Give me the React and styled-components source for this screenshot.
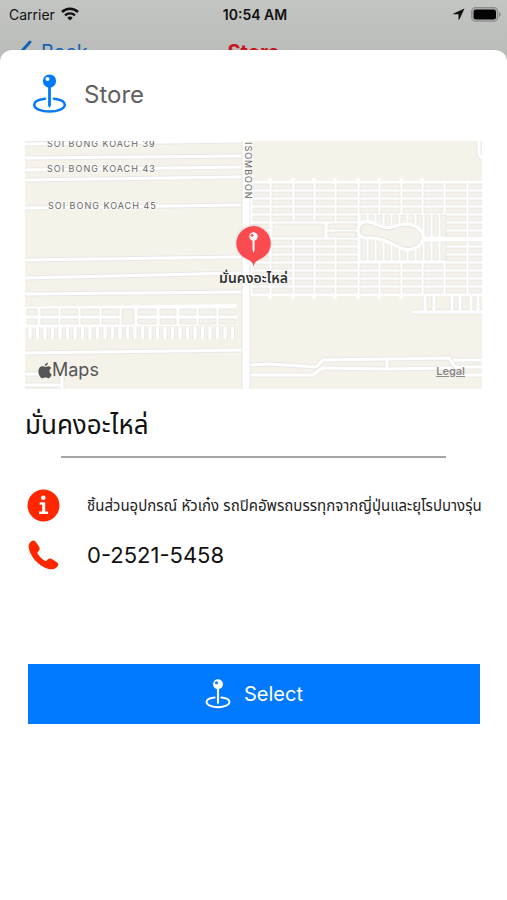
import React from 'react';
import styled, { createGlobalStyle } from 'styled-components';

const GlobalStyle = createGlobalStyle`
  * { box-sizing: border-box; }
  html { background: #fff; }
  body {
    margin: 0;
    font-family: Inter, "Liberation Sans", "Noto Sans Thai", sans-serif;
    color: #111;
  }
`;

const Page = styled.div`
  display: flex;
  flex-direction: column;
  min-height: 100vh;
  background: #bbbdba;
`;

const StatusBar = styled.div`
  display: grid;
  grid-template-columns: 1fr auto 1fr;
  align-items: center;
  height: 28px;
  padding: 0 6px 0 9px;
  font-size: 14px;
  color: #111;
  background: linear-gradient(#c3c5c2, #bec0bd);
`;

const StatusGroup = styled.div`
  display: flex;
  align-items: center;
  justify-content: ${(p) => (p.$end ? 'flex-end' : 'flex-start')};
  gap: 6px;
`;

const Time = styled.time`
  font-weight: 600;
`;

const NavBar = styled.nav`
  display: grid;
  grid-template-columns: 1fr auto 1fr;
  align-items: start;
  height: 22px;
  padding: 12px 18px 0;
  overflow: hidden;
  font-size: 20px;
  line-height: 24px;
  background: linear-gradient(#bec0bd, #bbbdba);
`;

const BackButton = styled.button`
  display: flex;
  gap: 8px;
  padding: 0;
  border: 0;
  background: none;
  color: #1263ba;
  font: inherit;
  text-align: left;
`;

const NavTitle = styled.span`
  color: #c4161c;
  font-weight: 700;
`;

const Sheet = styled.main`
  flex: 1;
  display: flex;
  flex-direction: column;
  padding: 24px 25px;
  border-radius: 12px 12px 0 0;
  background: #fff;
`;

const SheetHeader = styled.header`
  display: flex;
  align-items: center;
  gap: 17px;
  height: 40px;
  padding-left: 7px;
  color: #027aff;
`;

const SheetTitle = styled.h1`
  margin: 0;
  font-size: 24px;
  font-weight: 400;
  color: #606060;
`;

const MapFrame = styled.section`
  position: relative;
  height: 248px;
  margin-top: 27px;
  overflow: hidden;
  background: #f5f2eb;
`;

const MapDrawing = styled.svg`
  display: block;
  width: 100%;
  height: 100%;
`;

const RoadName = styled.text`
  font-size: 9px;
  letter-spacing: 1px;
  fill: #68686a;
  stroke: #fbfaf7;
  stroke-width: 2px;
  paint-order: stroke;
`;

const Marker = styled.div`
  position: absolute;
  top: 82px;
  left: 50%;
  display: flex;
  flex-direction: column;
  align-items: center;
  transform: translateX(-50%);
`;

const MarkerLabel = styled.span`
  font-size: 14px;
  line-height: 22px;
  font-weight: 600;
  white-space: nowrap;
  color: #333;
  text-shadow: 0 0 2px #fff, 0 0 2px #fff;
`;

const MapBrand = styled.div`
  position: absolute;
  left: 13px;
  bottom: 7px;
  display: flex;
  align-items: center;
  font-size: 18px;
  line-height: 24px;
  color: #555;
`;

const LegalLink = styled.a`
  position: absolute;
  right: 17px;
  bottom: 11px;
  font-size: 11px;
  line-height: 14px;
  font-weight: 600;
  color: #8b8b88;
`;

const PlaceName = styled.h2`
  margin: 16px 0 0;
  font-size: 26px;
  line-height: 40px;
  font-weight: 400;
  color: #111;
`;

const Divider = styled.hr`
  width: calc(100% - 72px);
  height: 2px;
  margin: 11px auto 0;
  border: 0;
  background: #a6a6a6;
`;

const Details = styled.ul`
  display: flex;
  flex-direction: column;
  margin: 23px 0 0;
  padding: 0;
  list-style: none;
`;

const DetailRow = styled.li`
  display: flex;
  align-items: center;
  gap: 27px;
  height: 49px;
  padding-left: 2px;
`;

const Description = styled.span`
  font-size: 15px;
  line-height: 24px;
  white-space: nowrap;
  color: #222;
`;

const PhoneLink = styled.a`
  font-size: 22px;
  line-height: 28px;
  color: #111;
  text-decoration: none;
`;

const SelectButton = styled.button`
  display: flex;
  align-items: center;
  justify-content: center;
  gap: 13px;
  height: 60px;
  margin: 85px 2px 0 3px;
  border: 0;
  background: #027aff;
  color: #fff;
  font: inherit;
  font-size: 20px;
`;

function PinEllipse({ width, height, shine }) {
  return (
    <svg width={width} height={height} viewBox="0 0 34 40" fill="none" aria-hidden="true">
      <path
        d="M12.500 24.700C6 25.400 1.700 27.800 1.700 30.800C1.700 34.600 8.400 37.600 17 37.600C25.600 37.600 32.300 34.600 32.300 30.800C32.300 27.800 28 25.400 21.500 24.700"
        stroke="currentColor"
        strokeWidth="2.500"
        strokeLinecap="round"
      />
      <path d="M15.600 11h2.800v20.500l-1.400 2.500l-1.400-2.500z" fill="currentColor" />
      <circle cx="17" cy="7" r="6.600" fill="currentColor" />
      <circle cx="15" cy="5" r="2" fill={shine} />
    </svg>
  );
}

function Wifi() {
  return (
    <svg width="18" height="14" viewBox="0 0 18 14" fill="none" aria-hidden="true">
      <path d="M1 5a11.500 11.500 0 0 1 16 0" stroke="#111" strokeWidth="2.500" />
      <path d="M4 8.300a7.200 7.200 0 0 1 10 0" stroke="#111" strokeWidth="2.300" />
      <path d="M6.300 10.700a3.900 3.900 0 0 1 5.400 0L9 13.500z" fill="#111" />
    </svg>
  );
}

const Location = () => (
  <svg width="12" height="12" viewBox="0 0 12 12" aria-hidden="true">
    <path d="M11.500.5L.6 5.400c-.6.300-.5.900.2.900h4.700v4.900c0 .7.700.8 1 .1z" fill="#111" />
  </svg>
);

const Battery = () => (
  <svg width="30" height="15" viewBox="0 0 30 15" aria-hidden="true">
    <rect x=".7" y=".7" width="26" height="13.500" rx="4" fill="#b0b2af" stroke="#8b8d8b" strokeWidth="1.300" />
    <rect x="2.500" y="2.500" width="22.500" height="10" rx="2.300" fill="#050505" />
    <path d="M28 5v5c1-.4 1.600-1.300 1.600-2.500S29 5.400 28 5" fill="#858785" />
  </svg>
);

const Chevron = () => (
  <svg width="15" height="24" viewBox="0 0 15 24" fill="none" aria-hidden="true">
    <path d="M12 2L3 12l9 10" stroke="currentColor" strokeWidth="3" strokeLinecap="round" />
  </svg>
);

const InfoIcon = () => (
  <svg width="33" height="33" viewBox="0 0 33 33" aria-hidden="true">
    <circle cx="16.500" cy="16.500" r="16" fill="#ff2600" />
    <circle cx="16.300" cy="8.700" r="2.300" fill="#fff" />
    <path d="M12.700 13.300h5.500v9.300h2.900v2.500h-9v-2.500h3.100v-6.800h-2.500z" fill="#fff" />
  </svg>
);

const PhoneIcon = () => (
  <svg width="33" height="33" viewBox="-1 -2 33 33" aria-hidden="true">
    <path
      d="M.7 5C1.500 2 4 .2 6 .4C7.500.8 9 3.500 10.300 5.600C12 8 12.200 9.600 10.600 11.200L9.800 12C9.200 12.800 9.500 13.500 10 14.200C11.500 16.500 14 19 16.500 20.600C17.300 21.100 18 21.100 18.700 20.400L19.600 19.600C21 18.300 22.500 18.200 24.200 19.200L28.800 22.200C30.500 23.300 30.800 24.600 29.800 26C28 28.500 25.500 29.600 22.500 29.300C17 28.500 11.500 25 7.500 20.700C3.500 16.300.2 10 .7 5Z"
      fill="#ff2600"
    />
  </svg>
);

const MarkerIcon = () => (
  <svg width="38" height="44" viewBox="0 0 38 44" aria-hidden="true">
    <ellipse cx="19" cy="20" rx="18.500" ry="19" fill="#a0a0a0" opacity=".16" />
    <path d="M19 43c-1-3.500-3-5.500-6.300-6.700A17.200 17.200 0 1 1 25.300 36.300C22 37.500 20 39.500 19 43z" fill="#fb4b50" />
    <path d="M18 15h2v12l-1 3-1-3z" fill="#fff" />
    <circle cx="19" cy="13.500" r="4.200" fill="#fff" />
    <circle cx="17.600" cy="12.300" r="1.400" fill="#fb4b50" />
  </svg>
);

const AppleMark = () => (
  <svg width="14" height="17" viewBox="0 0 14 17" aria-hidden="true">
    <path
      d="M9.900.5c.1 1.900-1.300 3.500-3 3.600C6.700 2.400 8.200.7 9.900.500zM7.200 5c.7 0 1.600-.8 3-.8 1.200 0 2.400.6 3.100 1.700-2.700 1.600-2.300 5.200.5 6.300-.6 1.700-2 4.100-3.500 4.100-1.100 0-1.500-.7-2.900-.7s-1.800.7-2.800.7C2.600 16.300.4 12.700.4 9.500c0-3.300 2-5.200 4-5.200 1.300 0 2.200.7 2.800.7z"
      fill="#555"
    />
  </svg>
);

const ROADS = [
  'M0 3L216 0', 'M0 17L216 15', 'M0 29L216 26', 'M0 39L216 36', 'M0 67L216 64',
  'M0 119L216 116', 'M0 137L216 132', 'M0 153L216 151', 'M0 212L218 209',
  'M0 233H31', 'M0 244H36M37 234V248',
  'M225 224L245 223L291 226L298 219L424 217L430 226',
  'M225 234H288L297 227L362 228L425 227L432 234H457',
  'M362 219V228', 'M428 219H457', 'M430 226H457',
  'M387 171H457', 'M400 155V171', 'M409 155V171', 'M427 155V171', 'M435 155V171', 'M446 155V171', 'M453 155V171',
  'M454 0V12Q454 15 457 17',
];

const COLUMN_EDGES = [226, 245, 268, 289, 310, 333, 354, 376, 397, 419, 442, 458];
const LEFT_LOTS = [[2, 12], [16, 33], [36, 53], [56, 74], [77, 94], [113, 131], [135, 151], [155, 171], [174, 191], [194, 211]];

function cityBlocks() {
  const blocks = [];
  for (let row = 0; row < 14; row += 1) {
    const y = 43 + row * 8;
    for (let col = 0; col < COLUMN_EDGES.length - 1; col += 1) {
      const park = col >= 5 && col <= 8 && row >= 4 && row <= 9;
      const plaza = col >= 1 && col <= 3 && (row === 5 || row === 6);
      if (!park && !plaza) {
        blocks.push([COLUMN_EDGES[col] + 2, y, COLUMN_EDGES[col + 1] - COLUMN_EDGES[col] - 3, 5]);
      }
    }
  }
  for (let i = 0; i < 11; i += 1) {
    blocks.push([336 + i * 8, 74, 5, i > 6 ? 21 : 13]);
    blocks.push([336 + i * 8, i > 6 ? 101 : 97, 5, i > 6 ? 18 : 22]);
  }
  blocks.push([248, 83, 51, 13], [303, 83, 28, 5], [303, 91, 28, 5]);
  return blocks;
}

const BLOCKS = cityBlocks();
const TEETH = Array.from({ length: 28 }, (_, i) => `M${5 + i * 7.500} 186V198`).join('');
const PARK = 'M335 89C335 82 342 81 352 86C361 90 367 89 374 86C387 83 397 89 396 98C393 107 382 109 372 103C361 97 351 94 342 95C337 95 335 92 335 89z';

function StreetMap() {
  return (
    <MapDrawing viewBox="0 0 457 248" preserveAspectRatio="xMidYMid slice" role="img" aria-label="Street map">
      <rect width="457" height="248" fill="#f5f2ea" />
      <g fill="none" stroke="#e9e8e9" strokeWidth="5">
        {ROADS.map((d) => <path key={d} d={d} />)}
      </g>
      <g fill="none" stroke="#fff" strokeWidth="3">
        {ROADS.map((d) => <path key={d} d={d} />)}
      </g>
      <path d="M225 40H457V155H225z" fill="#fff" />
      <path d="M245 37v6M268 37v6M289 37v6M310 37v6M333 37v6M354 37v6M376 37v6M397 37v6M245 152v6M268 152v6M289 152v6M310 152v6M333 152v6M354 152v6M376 152v6" stroke="#fff" strokeWidth="3" />
      <g fill="#f4f2eb" stroke="#e6e5e4" strokeWidth=".8">
        {BLOCKS.map(([x, y, w, h]) => <rect key={`${x}-${y}`} x={x} y={y} width={w} height={h} />)}
      </g>
      <path d={PARK} fill="#f4f2ea" stroke="#fff" strokeWidth="7" />
      <path d={PARK} fill="#f4f2ea" stroke="#e4e3e1" />
      <path d="M397 98H457" stroke="#fff" strokeWidth="4" />
      <path d="M0 166L212 163V184L0 187z" fill="#fff" />
      <path d={TEETH} stroke="#e4e3e3" strokeWidth="5" />
      <path d={TEETH} stroke="#fff" strokeWidth="3.500" />
      <g fill="#f4f2eb" stroke="#e4e3e1" strokeWidth=".8">
        {LEFT_LOTS.map(([a, b]) => (
          <React.Fragment key={a}>
            <rect x={a} y="168" width={b - a} height="6" />
            <rect x={a} y="178" width={b - a} height="5" />
          </React.Fragment>
        ))}
        <rect x="97" y="168" width="12" height="15" />
      </g>
      <path d="M221 0V248" stroke="#e6e5e4" strokeWidth="9" />
      <path d="M221 0V248" stroke="#fff" strokeWidth="7" />
      <RoadName x="22" y="6">SOI BONG KOACH 39</RoadName>
      <RoadName x="22" y="31">SOI BONG KOACH 43</RoadName>
      <RoadName x="23" y="68">SOI BONG KOACH 45</RoadName>
      <RoadName transform="translate(220 1) rotate(90)">ISOMBOON</RoadName>
    </MapDrawing>
  );
}

export default function App() {
  return (
    <>
      <GlobalStyle />
      <Page>
        <StatusBar>
          <StatusGroup>Carrier <Wifi /></StatusGroup>
          <Time>10:54 AM</Time>
          <StatusGroup $end><Location /><Battery /></StatusGroup>
        </StatusBar>
        <NavBar>
          <BackButton type="button"><Chevron />Back</BackButton>
          <NavTitle>Store</NavTitle>
        </NavBar>
        <Sheet>
          <SheetHeader>
            <PinEllipse width={35} height={40} shine="#fff" />
            <SheetTitle>Store</SheetTitle>
          </SheetHeader>
          <MapFrame>
            <StreetMap />
            <Marker>
              <MarkerIcon />
              <MarkerLabel>มั่นคงอะไหล่</MarkerLabel>
            </Marker>
            <MapBrand><AppleMark />Maps</MapBrand>
            <LegalLink href="#legal">Legal</LegalLink>
          </MapFrame>
          <PlaceName>มั่นคงอะไหล่</PlaceName>
          <Divider />
          <Details>
            <DetailRow>
              <InfoIcon />
              <Description>ชิ้นส่วนอุปกรณ์ หัวเก๋ง รถปิคอัพรถบรรทุกจากญี่ปุ่นและยุโรปบางรุ่น</Description>
            </DetailRow>
            <DetailRow>
              <PhoneIcon />
              <PhoneLink href="tel:025215458">0-2521-5458</PhoneLink>
            </DetailRow>
          </Details>
          <SelectButton type="button">
            <PinEllipse width={26} height={30} shine="#027aff" />
            Select
          </SelectButton>
        </Sheet>
      </Page>
    </>
  );
}
